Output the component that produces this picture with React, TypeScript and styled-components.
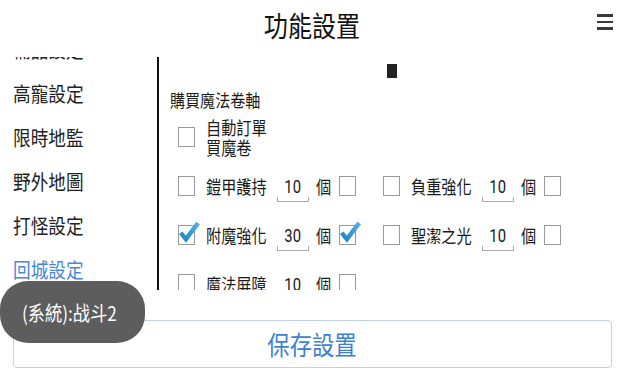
import React from "react";
import styled, { createGlobalStyle } from "styled-components";

const GlobalStyle = createGlobalStyle`
  html, body {
    margin: 0;
    padding: 0;
    background: #fff;
  }
  body {
    font-family: "Noto Sans CJK TC", "Noto Sans CJK SC", "Noto Sans", sans-serif;
    color: #1a1a1a;
  }
  #root {
    width: 624px;
    height: 370px;
    overflow: hidden;
  }
`;

interface Row {
  label: string;
  count: number;
  on: boolean;
  keep: boolean;
}

const sideItems = ["補品設定", "高寵設定", "限時地監", "野外地圖", "打怪設定", "回城設定"];

const rows: Row[][] = [
  [
    { label: "鎧甲護持", count: 10, on: false, keep: false },
    { label: "負重強化", count: 10, on: false, keep: false },
  ],
  [
    { label: "附魔強化", count: 30, on: true, keep: true },
    { label: "聖潔之光", count: 10, on: false, keep: false },
  ],
  [{ label: "魔法屏障", count: 10, on: false, keep: false }],
];

const CheckBox: React.FC<{ checked?: boolean }> = ({ checked }) => (
  <Box>
    {checked && (
      <Tick viewBox="0 0 24 26">
        <defs>
          <linearGradient id="tickFill" x1="0" y1="1" x2="1" y2="0">
            <stop offset="0" stopColor="#1b7fc0" />
            <stop offset="1" stopColor="#56b3ea" />
          </linearGradient>
        </defs>
        <path d="M2 14 L5.5 11.6 L8.8 15.6 L19.3 1.8 L23 4.2 L9 22.8 Z" fill="url(#tickFill)" />
      </Tick>
    )}
  </Box>
);

const App: React.FC = () => {
  return (
    <Page>
      <GlobalStyle />
      <Header>
        <Title>
          <Squeeze $origin="center">功能設置</Squeeze>
        </Title>
        <MenuIcon>
          <span />
          <span />
          <span />
        </MenuIcon>
      </Header>

      <Body>
        <Sidebar>
          <SideList>
            {sideItems.map((item) => (
              <SideItem key={item} $active={item === "回城設定"}>
                <Squeeze>{item}</Squeeze>
              </SideItem>
            ))}
          </SideList>
        </Sidebar>

        <Content>
          <Marker />
          <Section>
            <SectionTitle>
              <Squeeze>購買魔法卷軸</Squeeze>
            </SectionTitle>
            <AutoRow>
              <CheckBox />
              <AutoText>
                <Squeeze $scale={0.82}>自動訂單</Squeeze>
                <Squeeze $scale={0.82}>買魔卷</Squeeze>
              </AutoText>
            </AutoRow>
            {rows.map((row, i) => (
              <ItemRow key={i}>
                {row.map((r) => (
                  <Group key={r.label}>
                    <CheckBox checked={r.on} />
                    <Label>
                      <Squeeze $scale={0.82}>{r.label}</Squeeze>
                    </Label>
                    <Count>
                      <Squeeze $origin="center" $scale={0.78}>
                        {r.count}
                      </Squeeze>
                    </Count>
                    <Unit>
                      <Squeeze $scale={0.82}>個</Squeeze>
                    </Unit>
                    <KeepBox>
                      <CheckBox checked={r.keep} />
                    </KeepBox>
                  </Group>
                ))}
              </ItemRow>
            ))}
          </Section>
        </Content>
      </Body>

      <Footer>
        <SaveButton>
          <Squeeze $origin="center">保存設置</Squeeze>
        </SaveButton>
      </Footer>

      <Toast>
        <Squeeze>(系統):战斗2</Squeeze>
      </Toast>
    </Page>
  );
};

export default App;

const Page = styled.div`
  position: relative;
  width: 624px;
  height: 370px;
  display: flex;
  flex-direction: column;
  overflow: hidden;
`;

const Squeeze = styled.span<{ $origin?: string; $scale?: number }>`
  display: inline-block;
  white-space: nowrap;
  transform: scaleX(${(p) => p.$scale ?? 0.86});
  transform-origin: ${(p) => p.$origin ?? "left"} center;
`;

const Header = styled.header`
  flex: none;
  height: 57px;
  display: grid;
  grid-template-columns: 1fr auto 1fr;
  align-items: center;
`;

const Title = styled.h1`
  grid-column: 2;
  margin: 0 0 7px;
  font-size: 28px;
  font-weight: 400;
  line-height: 1;
  color: #111;
`;

const MenuIcon = styled.div`
  justify-self: end;
  margin: 0 11px 13px 0;
  width: 16px;
  display: flex;
  flex-direction: column;
  gap: 4px;

  span {
    display: block;
    height: 2.5px;
    background: #3a3a3a;
  }
`;

const Body = styled.div`
  flex: none;
  height: 233px;
  display: flex;
  overflow: hidden;
`;

const Sidebar = styled.nav`
  flex: none;
  width: 157px;
  border-right: 2px solid #111;
  overflow: hidden;
`;

const SideList = styled.ul`
  list-style: none;
  margin: -30px 0 0;
  padding: 0;
`;

const SideItem = styled.li<{ $active?: boolean }>`
  height: 44px;
  display: flex;
  align-items: center;
  padding-left: 13px;
  font-size: 20.5px;
  color: ${(p) => (p.$active ? "#4a86d8" : "#222")};
`;

const Content = styled.div`
  flex: 1;
  display: flex;
  flex-direction: column;
  min-height: 0;
`;

const Marker = styled.div`
  flex: none;
  align-self: center;
  width: 10px;
  height: 14px;
  margin-top: 7px;
  background: #222;
`;

const Section = styled.div`
  flex: none;
  padding-left: 11px;
  display: flex;
  flex-direction: column;
`;

const SectionTitle = styled.div`
  margin-top: 11px;
  height: 22px;
  line-height: 22px;
  font-size: 17.5px;
  color: #1a1a1a;
`;

const AutoRow = styled.div`
  margin-top: 6px;
  height: 40px;
  padding-left: 8px;
  display: flex;
  align-items: center;
`;

const AutoText = styled.div`
  margin-left: 11px;
  display: flex;
  flex-direction: column;
  font-size: 18.5px;
  line-height: 20px;
`;

const ItemRow = styled.div`
  flex: none;
  margin-top: 9px;
  height: 40px;
  padding-left: 8px;
  display: flex;
  align-items: center;
  gap: 27px;
  font-size: 18.5px;
`;

const Group = styled.div`
  display: flex;
  align-items: center;
`;

const Box = styled.span`
  position: relative;
  flex: none;
  width: 17px;
  height: 20px;
  box-sizing: border-box;
  border: 1.5px solid #9a9a9a;
`;

const Tick = styled.svg`
  position: absolute;
  left: -2px;
  top: -6px;
  width: 24px;
  height: 26px;
`;

const Label = styled.div`
  margin-left: 11px;
  width: 60px;
`;

const Count = styled.div`
  position: relative;
  margin-left: 11px;
  width: 32px;
  height: 40px;
  display: flex;
  align-items: center;
  justify-content: center;
  font-family: Roboto, "Liberation Sans", sans-serif;
  font-size: 19px;

  &::after {
    content: "";
    position: absolute;
    left: 0;
    right: 0;
    bottom: 4px;
    height: 4px;
    border: 1.5px solid #a8a8a8;
    border-top: none;
  }
`;

const Unit = styled.div`
  margin-left: 7px;
  width: 15px;
`;

const KeepBox = styled.div`
  margin-left: 8px;
  display: flex;
`;

const Footer = styled.footer`
  flex: 1;
  padding: 30px 12px 0 13px;
`;

const SaveButton = styled.button`
  width: 100%;
  height: 48px;
  box-sizing: border-box;
  border: 1px solid #c3d2e0;
  border-radius: 4px;
  background: #fff;
  font-family: inherit;
  font-size: 26px;
  line-height: 1;
  color: #3f7fd0;
  display: flex;
  align-items: center;
  justify-content: center;
`;

const Toast = styled.div`
  position: absolute;
  left: 0;
  top: 281px;
  width: 145px;
  height: 62px;
  box-sizing: border-box;
  padding-left: 22px;
  border-radius: 28px;
  background: #5d5d5d;
  color: #fff;
  font-size: 20px;
  display: flex;
  align-items: center;
`;
